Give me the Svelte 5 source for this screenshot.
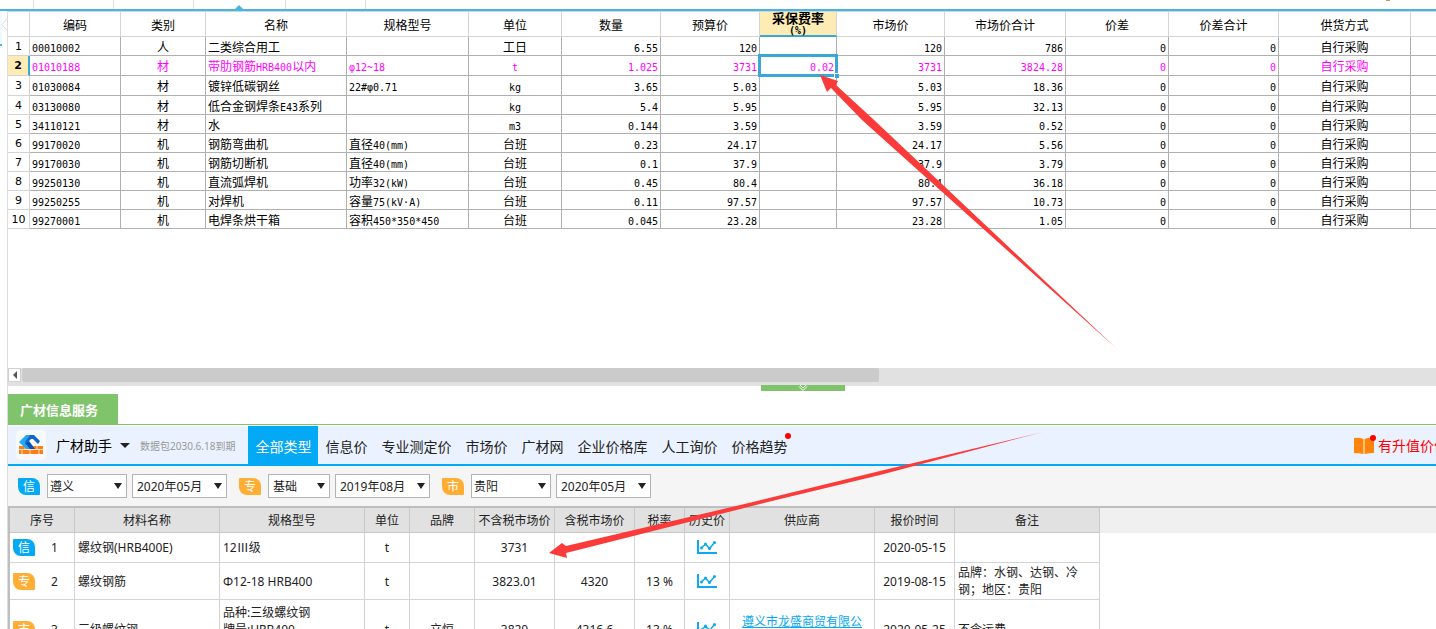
<script lang="ts">
  interface Material {
    code: string;
    kind: string;
    name: string;
    spec: string;
    unit: string;
    qty: string;
    budget: string;
    rate: string;
    market: string;
    total: string;
  }

  const headers = ['编码', '类别', '名称', '规格型号', '单位', '数量', '预算价', '采保费率(%)', '市场价', '市场价合计', '价差', '价差合计', '供货方式'];
  const colWidths = [22, 91, 85, 141, 122, 93, 99, 99, 77, 108, 121, 103, 110, 132];

  const materials: Material[] = [
    { code: '00010002', kind: '人', name: '二类综合用工', spec: '', unit: '工日', qty: '6.55', budget: '120', rate: '', market: '120', total: '786' },
    { code: '01010188', kind: '材', name: '带肋钢筋HRB400以内', spec: 'φ12~18', unit: 't', qty: '1.025', budget: '3731', rate: '0.02', market: '3731', total: '3824.28' },
    { code: '01030084', kind: '材', name: '镀锌低碳钢丝', spec: '22#φ0.71', unit: 'kg', qty: '3.65', budget: '5.03', rate: '', market: '5.03', total: '18.36' },
    { code: '03130080', kind: '材', name: '低合金钢焊条E43系列', spec: '', unit: 'kg', qty: '5.4', budget: '5.95', rate: '', market: '5.95', total: '32.13' },
    { code: '34110121', kind: '材', name: '水', spec: '', unit: 'm3', qty: '0.144', budget: '3.59', rate: '', market: '3.59', total: '0.52' },
    { code: '99170020', kind: '机', name: '钢筋弯曲机', spec: '直径40(mm)', unit: '台班', qty: '0.23', budget: '24.17', rate: '', market: '24.17', total: '5.56' },
    { code: '99170030', kind: '机', name: '钢筋切断机', spec: '直径40(mm)', unit: '台班', qty: '0.1', budget: '37.9', rate: '', market: '37.9', total: '3.79' },
    { code: '99250130', kind: '机', name: '直流弧焊机', spec: '功率32(kW)', unit: '台班', qty: '0.45', budget: '80.4', rate: '', market: '80.4', total: '36.18' },
    { code: '99250255', kind: '机', name: '对焊机', spec: '容量75(kV·A)', unit: '台班', qty: '0.11', budget: '97.57', rate: '', market: '97.57', total: '10.73' },
    { code: '99270001', kind: '机', name: '电焊条烘干箱', spec: '容积450*350*450', unit: '台班', qty: '0.045', budget: '23.28', rate: '', market: '23.28', total: '1.05' }
  ];

  const menu = ['全部类型', '信息价', '专业测定价', '市场价', '广材网', '企业价格库', '人工询价', '价格趋势'];

  const filters = [
    { tag: '信', label: '信息价', place: '遵义', month: '2020年05月', narrow: false },
    { tag: '专', label: '专业测定价', place: '基础', month: '2019年08月', narrow: true },
    { tag: '市', label: '市场价', place: '贵阳', month: '2020年05月', narrow: false }
  ];

  const priceHeaders = ['序号', '材料名称', '规格型号', '单位', '品牌', '不含税市场价', '含税市场价', '税率', '历史价', '供应商', '报价时间', '备注'];
  const priceWidths = [65, 145, 145, 45, 65, 80, 80, 50, 45, 145, 80, 145];

  const prices = [
    { tag: '信', name: '螺纹钢(HRB400E)', spec: ['12Ⅲ级'], brand: '', net: '3731', gross: '', tax: '', supplier: '', date: '2020-05-15', note: '' },
    { tag: '专', name: '螺纹钢筋', spec: ['Φ12-18 HRB400'], brand: '', net: '3823.01', gross: '4320', tax: '13 %', supplier: '', date: '2019-08-15', note: '品牌：水钢、达钢、冷钢；地区：贵阳' },
    { tag: '市', name: '三级螺纹钢', spec: ['品种:三级螺纹钢', '牌号:HRB400'], brand: '立恒', net: '3820', gross: '4316.6', tax: '13 %', supplier: '遵义市龙盛商贸有限公', date: '2020-05-25', note: '不含运费' }
  ];

  let selectedRow = 1;
  let activeMenu = 0;

  // splits a string into latin and CJK runs so that each gets its own size
  const runs = (text: string) => text.match(/[\x20-\x7e·φ]+|[^\x20-\x7e·φ]+/g) ?? [];
  const isLatin = (text: string) => /^[\x20-\x7e·φ]/.test(text);
</script>

{#snippet mixed(text: string)}
  {#each runs(text) as run}<span class:latin={isLatin(run)}>{run}</span>{/each}
{/snippet}

<div class="app">
  <div class="top-tabs">
    <span class="t1"></span><span class="t2"></span><span class="t2"></span><span class="t3"></span><span class="t2"></span>
    <i class="pointer"></i>
    <i class="mark"></i>
  </div>

  <div class="body">
    <div class="side">
      <svg width="7" height="36" viewBox="0 0 7 36">
        <path d="M0 0h2v33h-2z" fill="#effaff" />
        <path d="M0 33h2v2h-2z" fill="#45b5e2" />
        <path d="M7.500 7L2 13.500L7.500 20" fill="#fff" stroke="#ddd" />
      </svg>
    </div>

    <main>
      <div class="grid-pane">
        <table class="grid">
          <colgroup>
            {#each colWidths as w}<col style="width: {w}px" />{/each}
            <col />
          </colgroup>
          <thead>
            <tr>
              <th></th>
              {#each headers as h, i}
                {#if i === 7}
                  <th class="picked">采保费率<br /><span class="latin">(%)</span></th>
                {:else}
                  <th>{h}</th>
                {/if}
              {/each}
              <th></th>
            </tr>
          </thead>
          <tbody>
            {#each materials as m, i}
              <tr class:selected={i === selectedRow} class:tall={i === 1 || i === 2} on:click={() => (selectedRow = i)}>
                <td class="num">{i + 1}</td>
                <td>{@render mixed(m.code)}</td>
                <td class="center">{m.kind}</td>
                <td>{@render mixed(m.name)}</td>
                <td>{@render mixed(m.spec)}</td>
                <td class="center">{@render mixed(m.unit)}</td>
                <td class="right">{@render mixed(m.qty)}</td>
                <td class="right">{@render mixed(m.budget)}</td>
                <td class="right rate">{@render mixed(m.rate)}</td>
                <td class="right">{@render mixed(m.market)}</td>
                <td class="right">{@render mixed(m.total)}</td>
                <td class="right">{@render mixed('0')}</td>
                <td class="right">{@render mixed('0')}</td>
                <td class="center">自行采购</td>
                <td></td>
              </tr>
            {/each}
          </tbody>
        </table>
      </div>

      <div class="scrollbar">
        <button class="scroll-left" aria-label="向左滚动"></button>
        <div class="thumb"></div>
        <button class="collapse" aria-label="收起">
          <svg width="10" height="6" viewBox="0 0 10 6" fill="none" stroke="#fff">
            <path d="M2 0L5 3L8 0M1 1.500L5 5.500L9 1.500" />
          </svg>
        </button>
      </div>

      <section class="service">
        <div class="service-tabs"><button>广材信息服务</button></div>

        <nav class="toolbar">
          <svg class="logo" width="30" height="30" viewBox="0 0 30 30">
            <rect width="30" height="30" rx="5" fill="#f8f9fb" />
            <path d="M3 16h24v8h-24z" fill="#ff7f16" />
            <path d="M3 19.500h24M9 16v3.500M21 16v3.500M6 20v4M14 20v4M23 20v4" stroke="#ffe3ca" />
            <path d="M3 12l7-7h8l-8 7 7 7h-7z" fill="#28a9ee" />
            <path d="M9 13l4-2 6 8h-5z" fill="#0751bd" />
            <path d="M14 5h4l6 6-2 3-5-5h-2l-4 4-2-1z" fill="#1267cf" />
          </svg>
          <button class="helper">广材助手</button>
          <span class="expire">数据包2030.6.18到期</span>
          {#each menu as item, i}
            <button class="item" class:active={i === activeMenu} on:click={() => (activeMenu = i)}>
              {item}{#if i === 7}<i class="dot"></i>{/if}
            </button>
          {/each}
          <a class="value" href="#value">
            <svg width="20" height="20" viewBox="0 0 20 20">
              <path d="M0 3q5-1 9.500 1v15q-5-1-9.500-1z" fill="#ff840d" />
              <path d="M10.500 4q5-2 9.500-1v15q-5 0-9.500 1z" fill="#ff840d" />
              <path d="M10 4v15" stroke="#ffbd7a" stroke-width="2" />
            </svg>
            有升值价值
            <i class="dot"></i>
          </a>
        </nav>

        <div class="filters">
          {#each filters as f}
            <div class="filter">
              <span class="badge" class:blue={f.tag === '信'}>{f.tag}</span>
              <div class="select" class:narrow={f.narrow}>
                <select aria-label="{f.label}地区"><option>{f.place}</option></select>
              </div>
              <div class="select month">
                <select aria-label="{f.label}月份"><option>{f.month}</option></select>
              </div>
            </div>
          {/each}
        </div>

        <div class="prices-wrap">
          <table class="prices">
            <colgroup>
              {#each priceWidths as w}<col style="width: {w}px" />{/each}
              <col />
            </colgroup>
            <thead>
              <tr>
                {#each priceHeaders as h}<th>{h}</th>{/each}
                <th class="rest"></th>
              </tr>
            </thead>
            <tbody>
              {#each prices as p, i}
                <tr class="row{i + 1}">
                  <td>
                    <div class="index">
                      <span class="badge" class:blue={p.tag === '信'}>{p.tag}</span>
                      <span>{i + 1}</span>
                    </div>
                  </td>
                  <td class="left">{p.name}</td>
                  <td class="left spec">
                    {#each p.spec as line}<div>{line}</div>{/each}
                  </td>
                  <td>t</td>
                  <td>{p.brand}</td>
                  <td>{p.net}</td>
                  <td>{p.gross}</td>
                  <td>{p.tax}</td>
                  <td>
                    <button class="history" aria-label="历史价">
                      <svg width="20" height="15" viewBox="0 0 20 15" fill="none" stroke="#0ca9f2">
                        <path d="M1 0v13h19" stroke-width="2" />
                        <path d="M4.500 8L8.500 4L12.500 8.500L17.500 2.500" stroke-width="1.500" />
                        <g fill="#0ca9f2" stroke="none">
                          <circle cx="4.500" cy="8" r="1.500" />
                          <circle cx="8.500" cy="4" r="1.500" />
                          <circle cx="12.500" cy="8.500" r="1.500" />
                          <circle cx="17.500" cy="2.500" r="1.500" />
                        </g>
                      </svg>
                    </button>
                  </td>
                  <td>{#if p.supplier}<a href="#supplier">{p.supplier}</a>{/if}</td>
                  <td>{p.date}</td>
                  <td class="left note">{p.note}</td>
                  <td class="rest"></td>
                </tr>
              {/each}
            </tbody>
          </table>
        </div>
      </section>
    </main>
  </div>

  <svg class="arrows" width="1120" height="570" viewBox="0 0 1120 570" fill="#fb3b39">
    <path d="M820 75L838 81L836 85L873 119L1116 348L862 120L831 88L827 92Z" />
    <path d="M549 553L562 543L566 546L753 502L880 471L1043 432L880 475L776 500L566 553L567 558Z" />
  </svg>
</div>

<style>
  :global(body) {
    background: #fff;
    overflow: hidden;
  }

  .app {
    position: relative;
    display: flex;
    flex-direction: column;
    height: 100vh;
    overflow: hidden;
    font-family: "Noto Sans", "Noto Sans CJK SC", sans-serif;
    font-size: 12px;
    color: #222;
  }

  button {
    border: none;
    padding: 0;
    font: inherit;
    color: inherit;
    background: none;
    cursor: pointer;
  }

  .top-tabs {
    position: relative;
    display: flex;
    flex-shrink: 0;
    height: 9px;
    border-bottom: 2px solid #45b5e2;
  }

  .top-tabs span {
    box-sizing: border-box;
    width: 80px;
    border-right: 1px solid #ddd;
  }

  .top-tabs .t1 {
    width: 34px;
  }

  .top-tabs .t3 {
    width: 92px;
  }

  .pointer {
    position: absolute;
    left: 235px;
    bottom: 0;
    border: 4px solid transparent;
    border-top: none;
    border-bottom-color: #45b5e2;
  }

  .mark {
    width: 4px;
    height: 1px;
    margin-left: auto;
    margin-right: 46px;
    background: #c99b52;
  }

  .body {
    display: flex;
    flex: 1;
    min-height: 0;
  }

  .side {
    flex: 0 0 7px;
    border-right: 1px solid #ddd;
  }

  .side svg {
    display: block;
  }

  main {
    display: flex;
    flex-direction: column;
    flex: 1;
    min-width: 0;
  }

  .grid-pane {
    flex: 1;
    min-height: 0;
    overflow: hidden;
    border-top: 1px solid #d4d4d4;
  }

  table {
    width: 100%;
    table-layout: fixed;
    border-collapse: separate;
    border-spacing: 0;
  }

  .grid {
    font-family: "Noto Sans CJK SC", sans-serif;
    color: #000;
    line-height: 14px;
  }

  .grid th {
    height: 22px;
    padding: 2px 0 0;
    font-weight: normal;
    border-right: 1px solid #d4d4d4;
    border-bottom: 1px solid #d4d4d4;
  }

  .grid .picked {
    height: 23px;
    padding: 0;
    font-size: 13px;
    font-weight: bold;
    line-height: 11px;
    background: #ffecb4;
    border-bottom: 2px solid #3ba7d5;
  }

  .grid td {
    height: 17px;
    padding: 1px 2px 0;
    white-space: nowrap;
    border-right: 1px solid #b0b0b0;
    border-bottom: 1px solid #b0b0b0;
  }

  .grid .tall td {
    height: 18px;
  }

  .grid td:last-child,
  .grid th:last-child {
    border-right: none;
  }

  .grid .latin {
    font-family: "DejaVu Sans Mono", monospace;
    font-size: 10px;
    line-height: 8px;
  }

  .grid .center {
    text-align: center;
  }

  .grid .right {
    text-align: right;
  }

  .grid .num {
    font-family: "DejaVu Sans", sans-serif;
    font-size: 11px;
    padding: 1px 0 0;
    text-align: center;
    border-color: #d4d4d4;
  }

  .grid .selected {
    color: #f0f;
  }

  .grid .selected .num {
    color: #000;
    font-weight: bold;
    background: #ffecb4;
    border-right: 2px solid #3ba7d5;
  }

  .grid .selected .rate {
    position: relative;
  }

  .selected .rate::before {
    content: "";
    position: absolute;
    inset: -2px -2px -2px -2px;
    border: 3px solid #3ba7d5;
  }

  .selected .rate::after {
    content: "";
    position: absolute;
    right: -3px;
    bottom: -3px;
    width: 4px;
    height: 4px;
    background: #3ba7d5;
    border-top: 1px solid #fff;
    border-left: 1px solid #fff;
  }

  .scrollbar {
    position: relative;
    display: flex;
    flex: 0 0 18px;
    background: #e1e1e1;
  }

  .scroll-left {
    display: flex;
    align-items: center;
    justify-content: center;
    width: 13px;
    height: 14px;
    background: #fff;
    border: 1px solid #d0d0d0;
    box-sizing: border-box;
  }

  .scroll-left::before {
    content: "";
    border: 4px solid transparent;
    border-left: none;
    border-right-color: #555;
  }

  .thumb {
    width: 60%;
    height: 14px;
    margin-left: 1px;
    background: #cbcbcb;
    border-radius: 2px;
  }

  .collapse {
    position: absolute;
    left: 753px;
    top: 17px;
    width: 84px;
    height: 6px;
    background: #7fc36b;
  }

  .collapse svg {
    display: block;
    margin: 0 auto;
  }

  .service {
    display: flex;
    flex-direction: column;
    flex: 0 0 243px;
    overflow: hidden;
  }

  .service-tabs {
    padding-top: 8px;
    border-bottom: 1px solid #7fc36b;
  }

  .service-tabs button {
    display: block;
    width: 110px;
    height: 30px;
    padding-right: 8px;
    font-size: 13px;
    font-weight: bold;
    color: #fff;
    background: #7fc36b;
  }

  .toolbar {
    display: flex;
    align-items: center;
    flex-shrink: 0;
    height: 38px;
    padding-left: 8px;
    margin-top: 1px;
    font-size: 14px;
    white-space: nowrap;
    background: #ebf2ff;
    border-bottom: 2px solid #03a9f4;
  }

  .logo {
    flex-shrink: 0;
  }

  .helper {
    display: flex;
    align-items: center;
    gap: 8px;
    margin-left: 10px;
    color: #000;
  }

  .helper::after {
    content: "";
    border: 5px solid transparent;
    border-top-color: #222;
    border-bottom: none;
  }

  .expire {
    margin: 0 13px 0 10px;
    font-size: 10px;
    color: #999;
  }

  .item {
    position: relative;
    height: 38px;
    padding: 2px 7px 0;
  }

  .item.active {
    color: #fff;
    background: #03a9f4;
  }

  .dot {
    position: absolute;
    top: 7px;
    right: 3px;
    width: 6px;
    height: 6px;
    border-radius: 50%;
    background: #f00;
  }

  .value {
    position: relative;
    display: flex;
    align-items: center;
    gap: 4px;
    width: 82px;
    height: 38px;
    margin-left: auto;
    overflow: hidden;
    color: #f00;
    text-decoration: none;
  }

  .value svg {
    flex-shrink: 0;
  }

  .value .dot {
    top: 9px;
    right: 60px;
  }

  .filters {
    display: flex;
    align-items: center;
    flex-shrink: 0;
    gap: 12px;
    height: 40px;
    padding-left: 10px;
    background: #f5f5f5;
  }

  .filter {
    display: flex;
    align-items: center;
    gap: 5px;
  }

  .filter .badge {
    margin-right: 2px;
  }

  .badge {
    width: 22px;
    height: 17px;
    font-size: 12px;
    line-height: 17px;
    text-align: center;
    color: #fff;
    background: #ffad33;
    border-radius: 1px 8px 1px 8px;
  }

  .badge.blue {
    background: #03a9f4;
  }

  .select {
    position: relative;
    width: 80px;
  }

  .select.narrow {
    width: 62px;
  }

  .select.month {
    width: 95px;
  }

  .select::after {
    content: "";
    position: absolute;
    top: 9px;
    right: 5px;
    border: 4px solid transparent;
    border-top: 6px solid #222;
    border-bottom: none;
    pointer-events: none;
  }

  select {
    display: block;
    appearance: none;
    box-sizing: border-box;
    width: 100%;
    height: 24px;
    padding: 0 2px;
    font: inherit;
    color: #222;
    background: #fff;
    border: 1px solid #b4b4b4;
    border-radius: 0;
  }

  .narrow select,
  .month select {
    padding-left: 4px;
  }

  .prices-wrap {
    flex: 1;
    min-height: 0;
    overflow: hidden;
    border-top: 2px solid #bebebe;
    border-left: 2px solid #bebebe;
  }

  .prices {
    line-height: 17px;
  }

  .prices th {
    height: 24px;
    padding: 0;
    font-weight: normal;
    white-space: nowrap;
    background: #e1e1e1;
    border-right: 1px solid #c8c8c8;
    border-bottom: 1px solid #c8c8c8;
  }

  .prices td {
    height: 29px;
    padding: 0;
    text-align: center;
    border-right: 1px solid #d4d4d4;
    border-bottom: 1px solid #d4d4d4;
  }

  .prices .row2 td {
    height: 36px;
  }

  .prices .row3 td {
    height: 58px;
  }

  .prices .left {
    padding-left: 3px;
    text-align: left;
  }

  .prices .row3 .spec {
    padding-top: 4px;
    height: 54px;
    vertical-align: top;
  }

  .prices .note {
    padding-right: 20px;
  }

  .prices th.rest {
    background: #f0f0f0;
    border: none;
  }

  .prices td.rest {
    border: none;
  }

  .index {
    display: flex;
    align-items: center;
    gap: 16px;
    padding-left: 3px;
  }

  .history {
    display: block;
    margin: 0 auto;
  }

  .history svg {
    display: block;
  }

  .prices a {
    display: block;
    padding-bottom: 16px;
    color: #03a9f4;
  }

  .arrows {
    position: absolute;
    top: 0;
    left: 0;
    pointer-events: none;
  }
</style>
